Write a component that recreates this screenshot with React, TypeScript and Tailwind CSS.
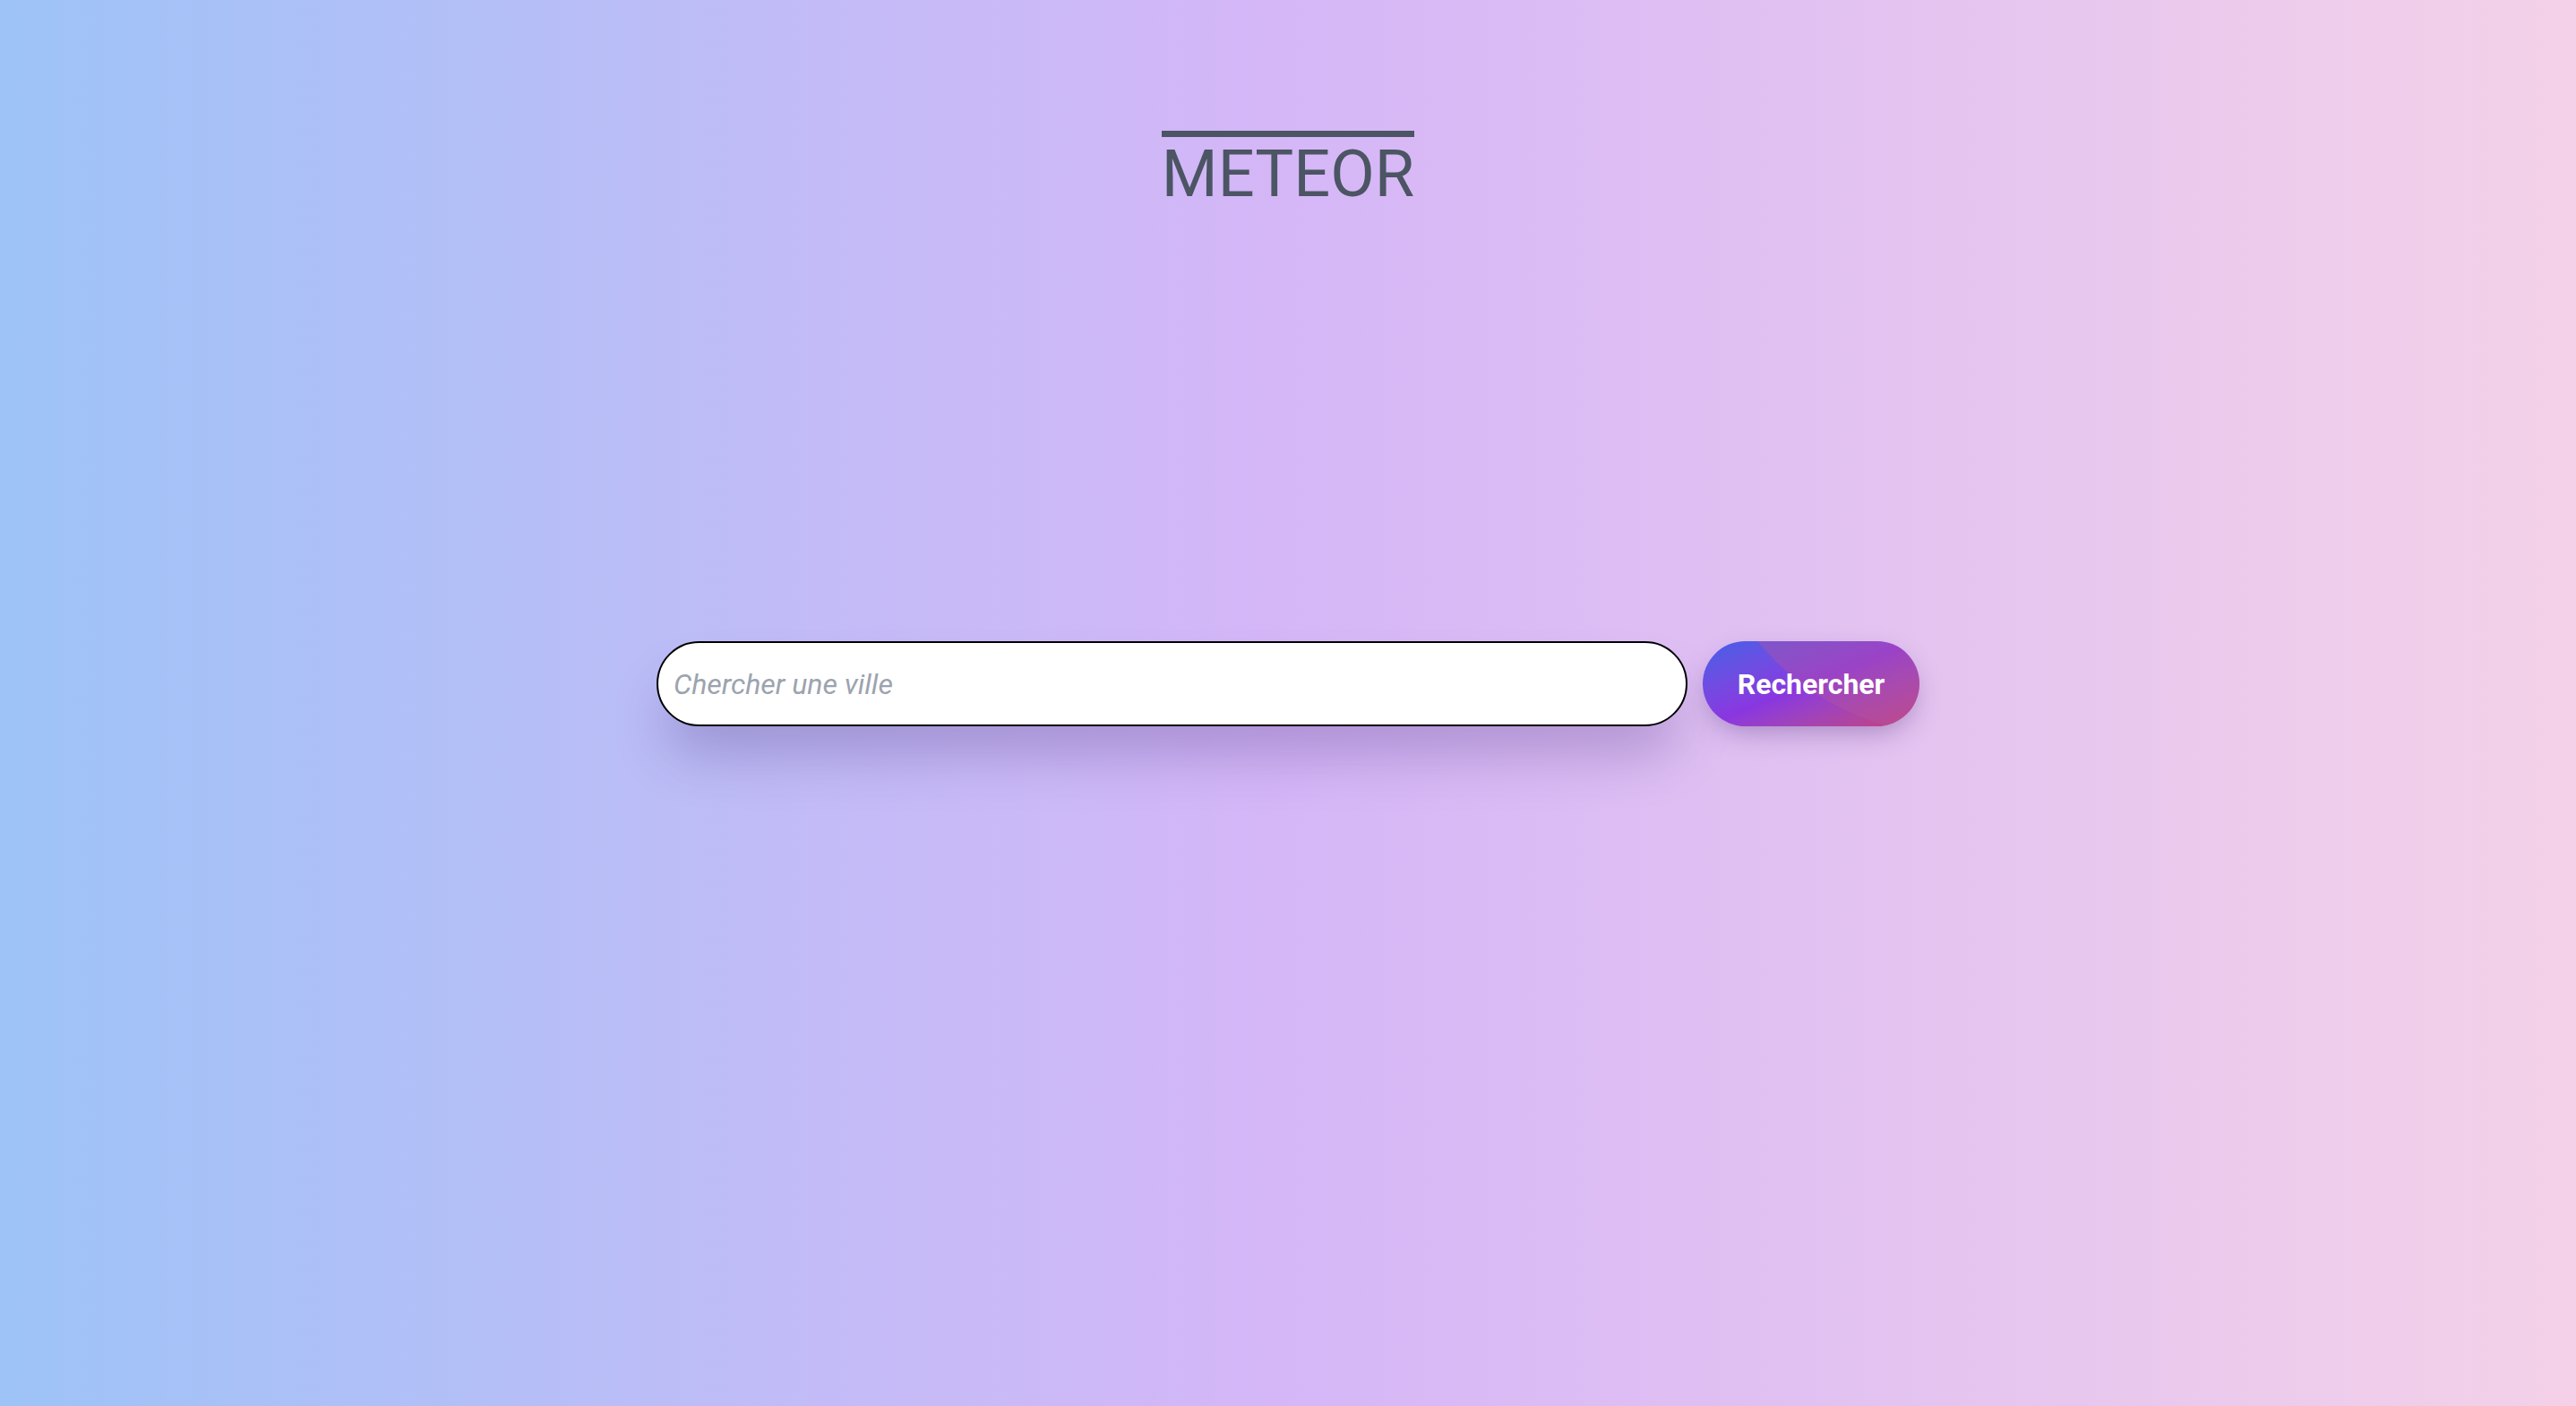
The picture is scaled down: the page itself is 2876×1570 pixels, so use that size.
import { useState } from 'react';

export default function App() {
  const [city, setCity] = useState('');

  return (
    <div className="min-h-screen w-full bg-gradient-to-r from-[#9dc3f7] via-[#d5b6f7] to-[#f4d1e8] font-['Roboto',sans-serif] flex flex-col items-center pt-[146px]">
      <h1 className="inline-block border-t-[7px] border-[#4b5563] text-[72px] leading-[84px] font-normal text-[#4b5563]">METEOR</h1>

      <form onSubmit={e => e.preventDefault()} className="flex items-center gap-[17px] mt-[479px]">
        <input
          value={city}
          onChange={e => setCity(e.target.value)}
          placeholder="Chercher une ville"
          className="w-[1151px] h-[95px] rounded-full bg-white border-2 border-black pl-[17px] pr-6 text-[32px] text-gray-700 placeholder:italic placeholder:text-[#9ca3af] outline-none shadow-[0_40px_60px_-10px_rgba(60,40,120,0.28)]"
        />
        <button type="submit" className="relative overflow-hidden w-[242px] h-[95px] rounded-full bg-gradient-to-br from-[#3f5fe6] via-[#8a36e0] to-[#c83e78] text-white text-[32px] font-bold shadow-[0_12px_30px_-6px_rgba(60,30,110,0.35)]">
          <span className="absolute left-[-1px] top-[-456px] w-[560px] h-[560px] rounded-full bg-[#b5559f]/40" />
          <span className="relative">Rechercher</span>
        </button>
      </form>
    </div>
  );
}
